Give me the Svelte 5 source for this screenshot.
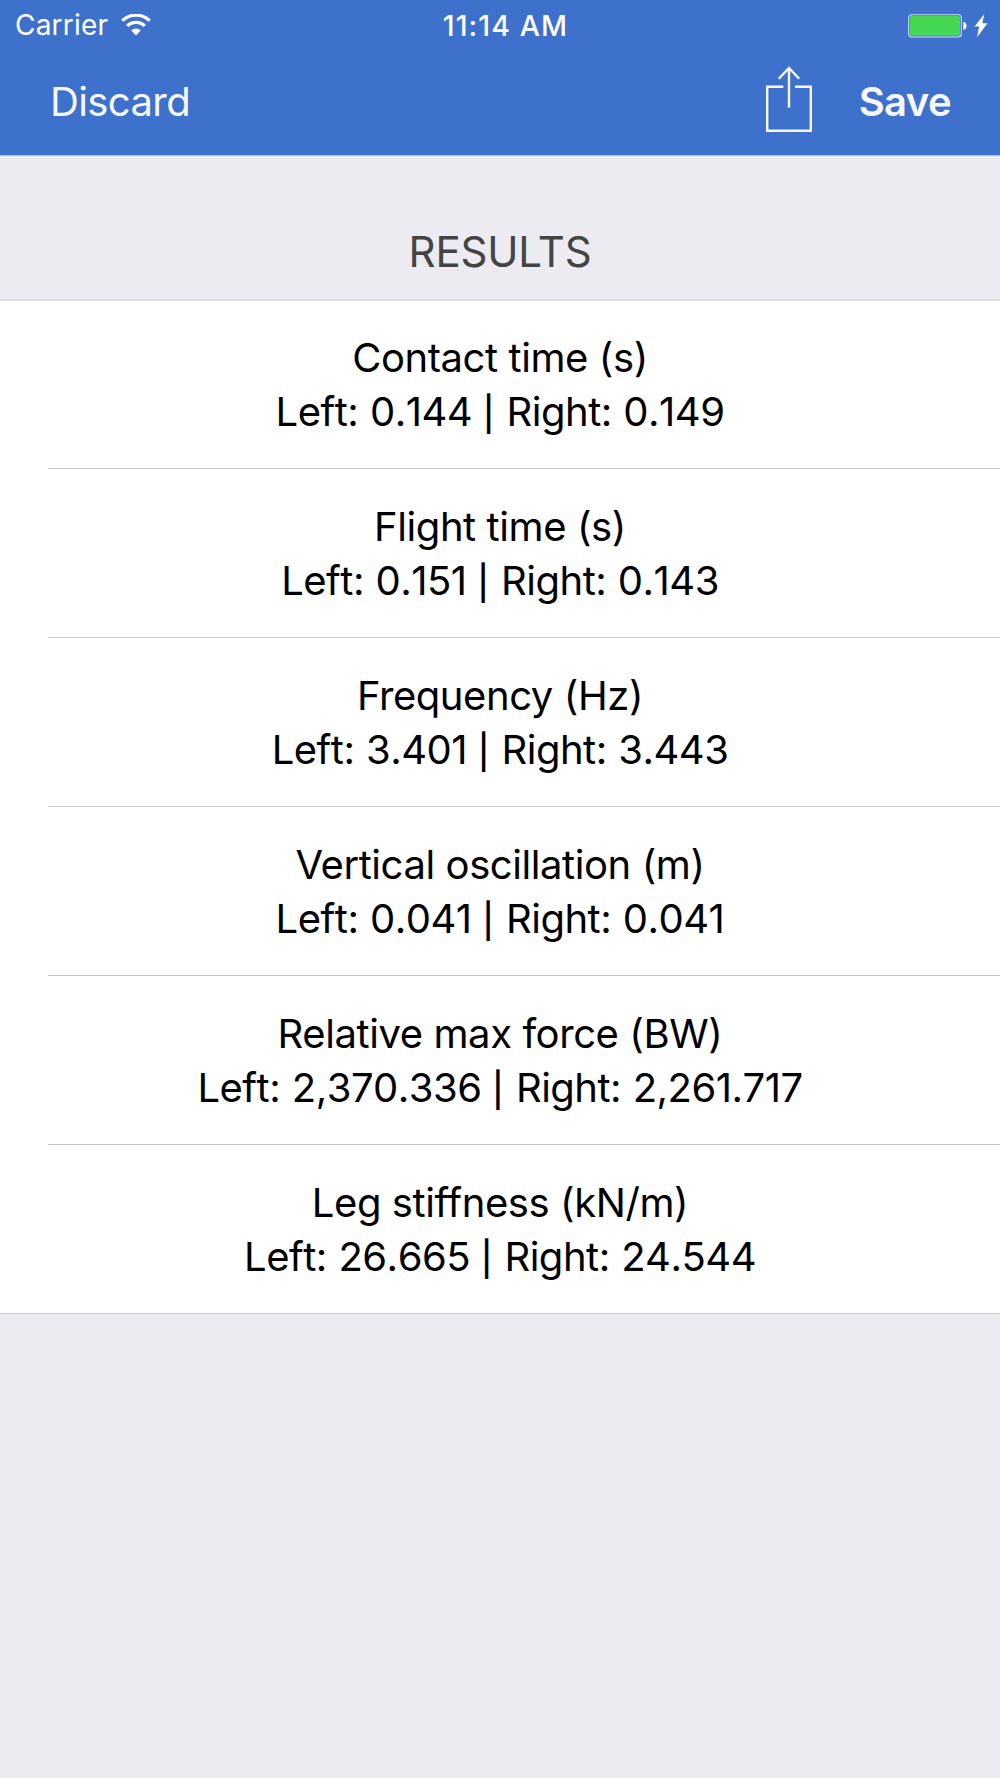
<script lang="ts">
  type Result = {
    title: string;
    left: string;
    right: string;
  };

  const results: Result[] = [
    { title: "Contact time (s)", left: "0.144", right: "0.149" },
    { title: "Flight time (s)", left: "0.151", right: "0.143" },
    { title: "Frequency (Hz)", left: "3.401", right: "3.443" },
    { title: "Vertical oscillation (m)", left: "0.041", right: "0.041" },
    { title: "Relative max force (BW)", left: "2,370.336", right: "2,261.717" },
    { title: "Leg stiffness (kN/m)", left: "26.665", right: "24.544" }
  ];
</script>

<main class="screen">
  <header>
    <div class="status-bar">
      <div class="carrier">
        <span>Carrier</span>
        <svg class="wifi" width="30" height="22" viewBox="0 0 30 22">
          <path d="M1.3 6.7a19.5 19.5 0 0 1 27.4 0" fill="none" stroke="#fff" stroke-width="3.3" />
          <path d="M6.2 11.9a12.5 12.5 0 0 1 17.6 0" fill="none" stroke="#fff" stroke-width="3.3" />
          <path d="M10.2 16.5a7 7 0 0 1 9.6 0L15 21.6z" fill="#fff" />
        </svg>
      </div>
      <time>11:14 AM</time>
      <div class="power">
        <svg width="80" height="24" viewBox="0 0 80 24">
          <rect x=".7" y=".7" width="52.6" height="22.3" rx="3" fill="none" stroke="#cddcf8" stroke-width="1.1" />
          <rect x="2" y="2" width="50" height="19.7" rx="1.5" fill="#45d654" />
          <path d="M55.3 8.1c4.4 0 4.4 7.8 0 7.8z" fill="#fff" />
          <path d="M76.3 0 66.6 12.6h4.6L69 23.2l10.5-13.9h-5.2z" fill="#fff" />
        </svg>
      </div>
    </div>
    <nav>
      <button type="button">Discard</button>
      <div class="actions">
        <button type="button" class="share" aria-label="Share">
          <svg width="48" height="67" viewBox="0 0 48 67" fill="none" stroke="#f7f7f7" stroke-width="2.4">
            <path d="M18.3 20.7H2.2v44h43.6v-44H30" />
            <path d="M24 41.5V2M13.8 12.8 24 2l10.2 10.8" />
          </svg>
        </button>
        <button type="button" class="save">Save</button>
      </div>
    </nav>
  </header>

  <h1>RESULTS</h1>

  <ul>
    {#each results as { title, left, right }}
      <li>
        <p class="title">{title}</p>
        <p class="values">Left: {left} <span class="bar">|</span> Right: {right}</p>
      </li>
    {/each}
  </ul>
</main>

<style>
  :global(body) {
    background: #ebebf1;
  }

  .screen {
    min-height: 1778px;
    background: #ebebf1;
    color: #000;
    font-family: Inter, "Liberation Sans", sans-serif;
  }

  header {
    box-sizing: border-box;
    height: 156px;
    border-bottom: 1px solid #b5b9c6;
    background: #3e71cc;
    color: #fff;
  }

  .status-bar {
    display: grid;
    grid-template-columns: 1fr auto 1fr;
    align-items: center;
    height: 50px;
    padding: 0 12px 0 15px;
    font-size: 28px;
    line-height: 51px;
  }

  .carrier {
    display: flex;
    align-items: center;
    gap: 13px;
    letter-spacing: 0.2px;
  }

  .wifi {
    margin-top: -2px;
  }

  time {
    padding-left: 8px;
    font-size: 28.5px;
    font-weight: 500;
    font-kerning: none;
    letter-spacing: 1.1px;
  }

  .power {
    display: flex;
    justify-content: flex-end;
  }

  nav {
    display: flex;
    justify-content: space-between;
    height: 105px;
    padding: 0 49px 0 50px;
  }

  .actions {
    display: flex;
    gap: 46px;
  }

  button {
    display: flex;
    align-items: center;
    padding: 0 0 2px;
    border: 0;
    background: none;
    color: #f7f7f7;
    font: inherit;
    font-size: 40px;
    letter-spacing: -0.6px;
  }

  .share {
    padding-bottom: 6px;
  }

  .save {
    font-weight: 600;
    letter-spacing: -0.6px;
  }

  h1 {
    box-sizing: border-box;
    height: 143px;
    margin: 0;
    padding-top: 70px;
    color: #444;
    font-size: 42px;
    font-weight: 400;
    letter-spacing: -0.2px;
    line-height: 52px;
    text-align: center;
  }

  ul {
    margin: 0;
    padding: 0;
    border-top: 1px solid #d4d3d9;
    border-bottom: 1px solid #c8c7cc;
    background: #fff;
    box-shadow: inset 0 1px #e3e3e8;
    list-style: none;
  }

  li {
    box-sizing: border-box;
    height: 169px;
    margin-left: 48px;
    padding: 31px 48px 0 0;
    border-bottom: 1px solid #c8c7cc;
    font-size: 40px;
    line-height: 53px;
    text-align: center;
  }

  li:last-child {
    height: 168px;
    border-bottom: 0;
  }

  li p {
    margin: 0;
    letter-spacing: -0.42px;
    white-space: nowrap;
  }

  li .title {
    margin-bottom: 1px;
  }

  li .values {
    font-kerning: none;
    letter-spacing: -0.5px;
  }

  .bar {
    margin: 0 1px 0 -1px;
    font-size: 34px;
    font-weight: 500;
    line-height: 1;
  }

  .values {
    word-spacing: 0.8px;
  }
</style>
